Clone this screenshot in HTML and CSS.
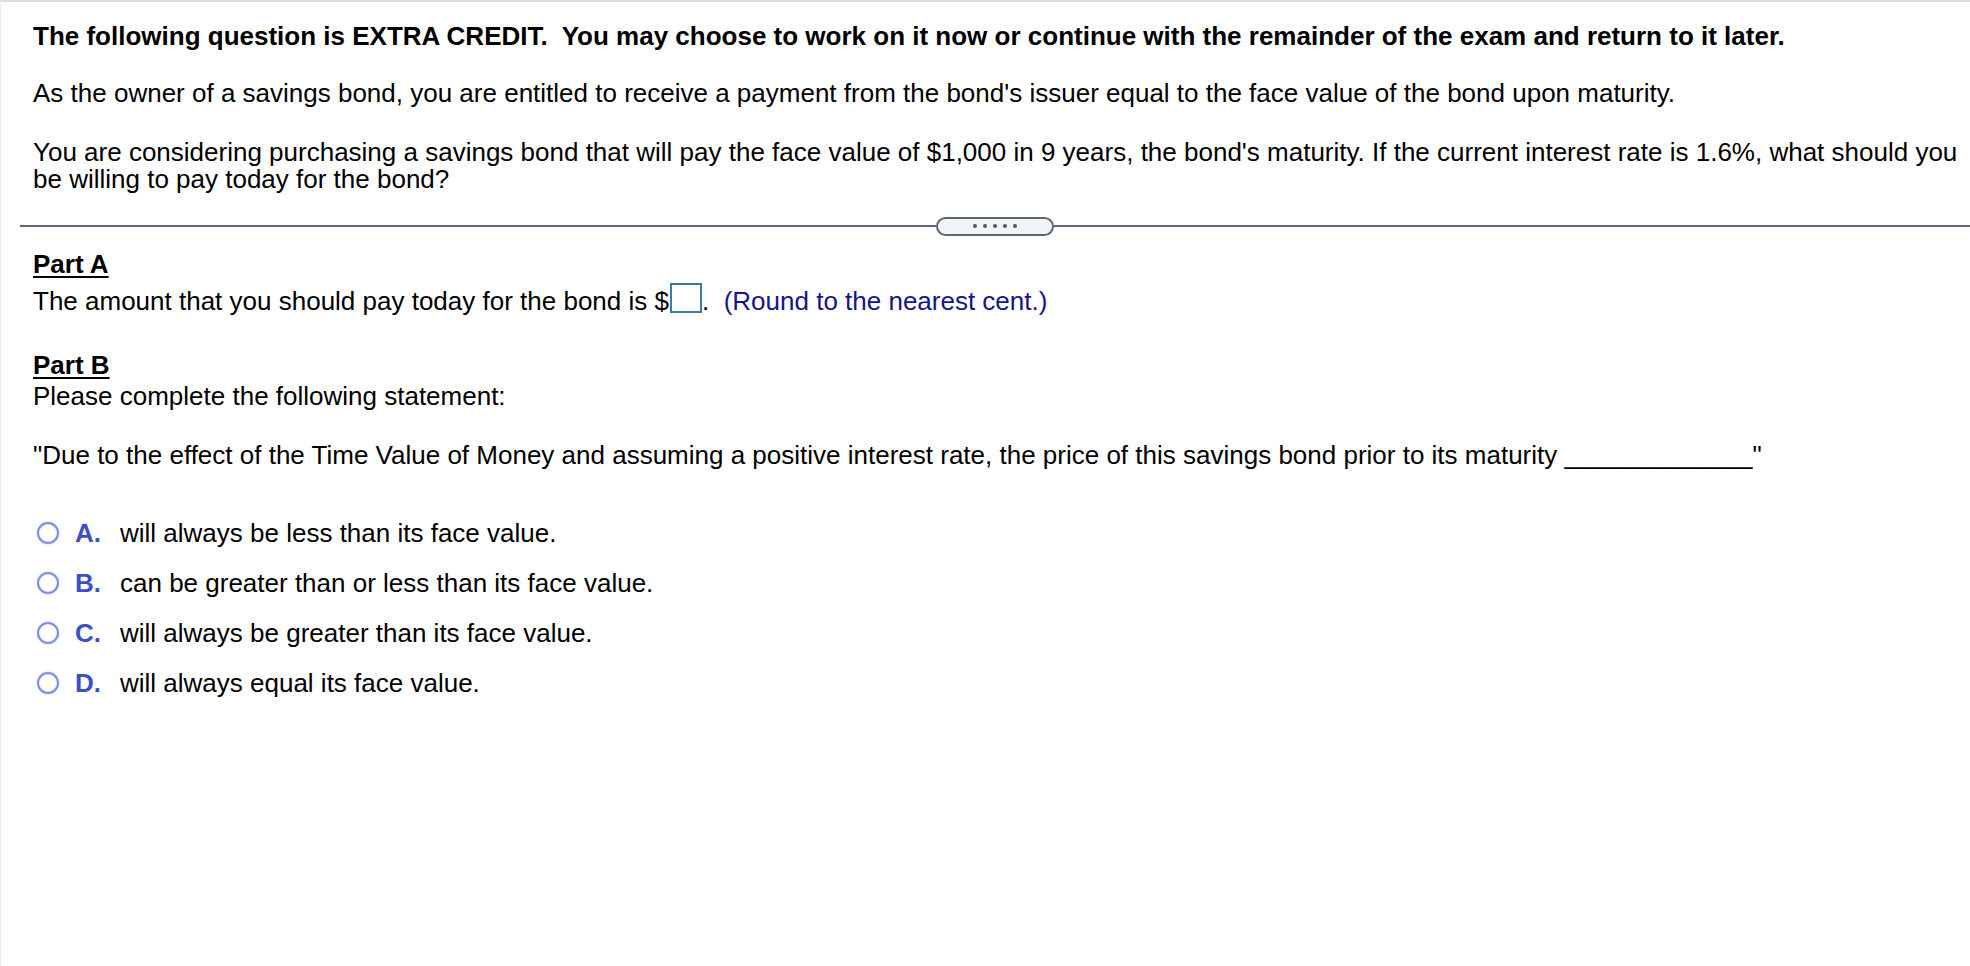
FILE: index.html
```html
<!DOCTYPE html>
<html lang="en">
<head>
<meta charset="utf-8">
<title>Extra Credit Question</title>
<link rel="stylesheet" href="styles.css">
</head>
<body>
<div class="page">
  <div class="intro">
    <p class="title">The following question is EXTRA CREDIT.&nbsp; You may choose to work on it now or continue with the remainder of the exam and return to it later.</p>
    <p class="para first">As the owner of a savings bond, you are entitled to receive a payment from the bond's issuer equal to the face value of the bond upon maturity.</p>
    <p class="para last">You are considering purchasing a savings bond that will pay the face value of $1,000 in 9 years, the bond's maturity. If the current interest rate is 1.6%, what should you be willing to pay today for the bond?</p>
  </div>

  <div class="separator">
    <span class="sep-line"></span>
    <span class="sep-pill"><i class="dot"></i><i class="dot"></i><i class="dot"></i><i class="dot"></i><i class="dot"></i></span>
    <span class="sep-line"></span>
  </div>

  <div class="parts">
    <section class="part part-a">
      <h2 class="part-title">Part A</h2>
      <p class="answer-line">The amount that you should pay today for the bond is $<span class="answer-box"></span>.&nbsp; <span class="hint">(Round to the nearest cent.)</span></p>
    </section>

    <section class="part part-b">
      <h2 class="part-title">Part B</h2>
      <p class="prompt">Please complete the following statement:</p>
      <p class="statement">"Due to the effect of the Time Value of Money and assuming a positive interest rate, the price of this savings bond prior to its maturity _____________"</p>

      <ul class="options">
        <li class="option"><span class="radio"></span><span class="letter">A.</span><span class="option-text">will always be less than its face value.</span></li>
        <li class="option"><span class="radio"></span><span class="letter">B.</span><span class="option-text">can be greater than or less than its face value.</span></li>
        <li class="option"><span class="radio"></span><span class="letter">C.</span><span class="option-text">will always be greater than its face value.</span></li>
        <li class="option"><span class="radio"></span><span class="letter">D.</span><span class="option-text">will always equal its face value.</span></li>
      </ul>
    </section>
  </div>
</div>
</body>
</html>
```

FILE: styles.css
```css
html, body {
  margin: 0;
  padding: 0;
  background: #ffffff;
}

body {
  font-family: "Liberation Sans", Arial, Helvetica, sans-serif;
  font-size: 26px;
  line-height: 30px;
  color: #000000;
}

.page {
  box-sizing: border-box;
  min-height: 966px;
  border-top: 2px solid #d8dce3;
  border-left: 1px solid #ececee;
}

p {
  margin: 0;
}

.intro {
  padding: 19px 0 0 32px;
}

.title {
  font-weight: bold;
  margin-bottom: 29px;
  white-space: nowrap;
}

.para {
  line-height: 27px;
}

.para.first {
  margin-bottom: 32px;
}

.para.last {
  margin-bottom: 23px;
  padding-right: 4px;
}

.separator {
  display: flex;
  align-items: center;
  height: 20px;
  margin-left: 19px;
}

.sep-line {
  flex: 1;
  height: 2px;
  background: #5d6875;
}

.sep-pill {
  box-sizing: border-box;
  width: 118px;
  height: 19px;
  border: 2px solid #5d6875;
  border-radius: 10px;
  background: #f3f4f6;
  display: flex;
  align-items: center;
  justify-content: center;
  gap: 6px;
}

.dot {
  width: 4px;
  height: 4px;
  border-radius: 50%;
  background: #4f5763;
}

.parts {
  padding: 13px 20px 0 32px;
}

.part-title {
  margin: 0 0 4px;
  font-size: 26px;
  line-height: 30px;
  font-weight: bold;
  text-decoration: underline;
  text-decoration-thickness: 2px;
  text-underline-offset: 3px;
}

.part-b {
  margin-top: 34px;
}

.part-b .part-title {
  margin-bottom: 1px;
}

.answer-box {
  display: inline-block;
  box-sizing: border-box;
  width: 32px;
  height: 30px;
  margin-left: 1px;
  border: 2px solid #3f7b9c;
  background: #ffffff;
  vertical-align: -3px;
}

.hint {
  color: #14148c;
}

.prompt {
  margin-bottom: 29px;
}

.statement {
  white-space: nowrap;
}

.options {
  list-style: none;
  margin: 38px 0 0;
  padding: 0;
}

.option {
  display: flex;
  align-items: center;
  height: 50px;
}

.radio {
  box-sizing: border-box;
  width: 22px;
  height: 22px;
  margin-left: 4px;
  margin-right: 16px;
  border: 2.5px solid #7d90e0;
  border-radius: 50%;
  box-shadow: 0 0 1.5px rgba(110, 130, 220, 0.7), inset 0 0 1px rgba(110, 130, 220, 0.5);
  flex: none;
}

.letter {
  width: 45px;
  flex: none;
  font-weight: bold;
  color: #3c50c6;
}
```
